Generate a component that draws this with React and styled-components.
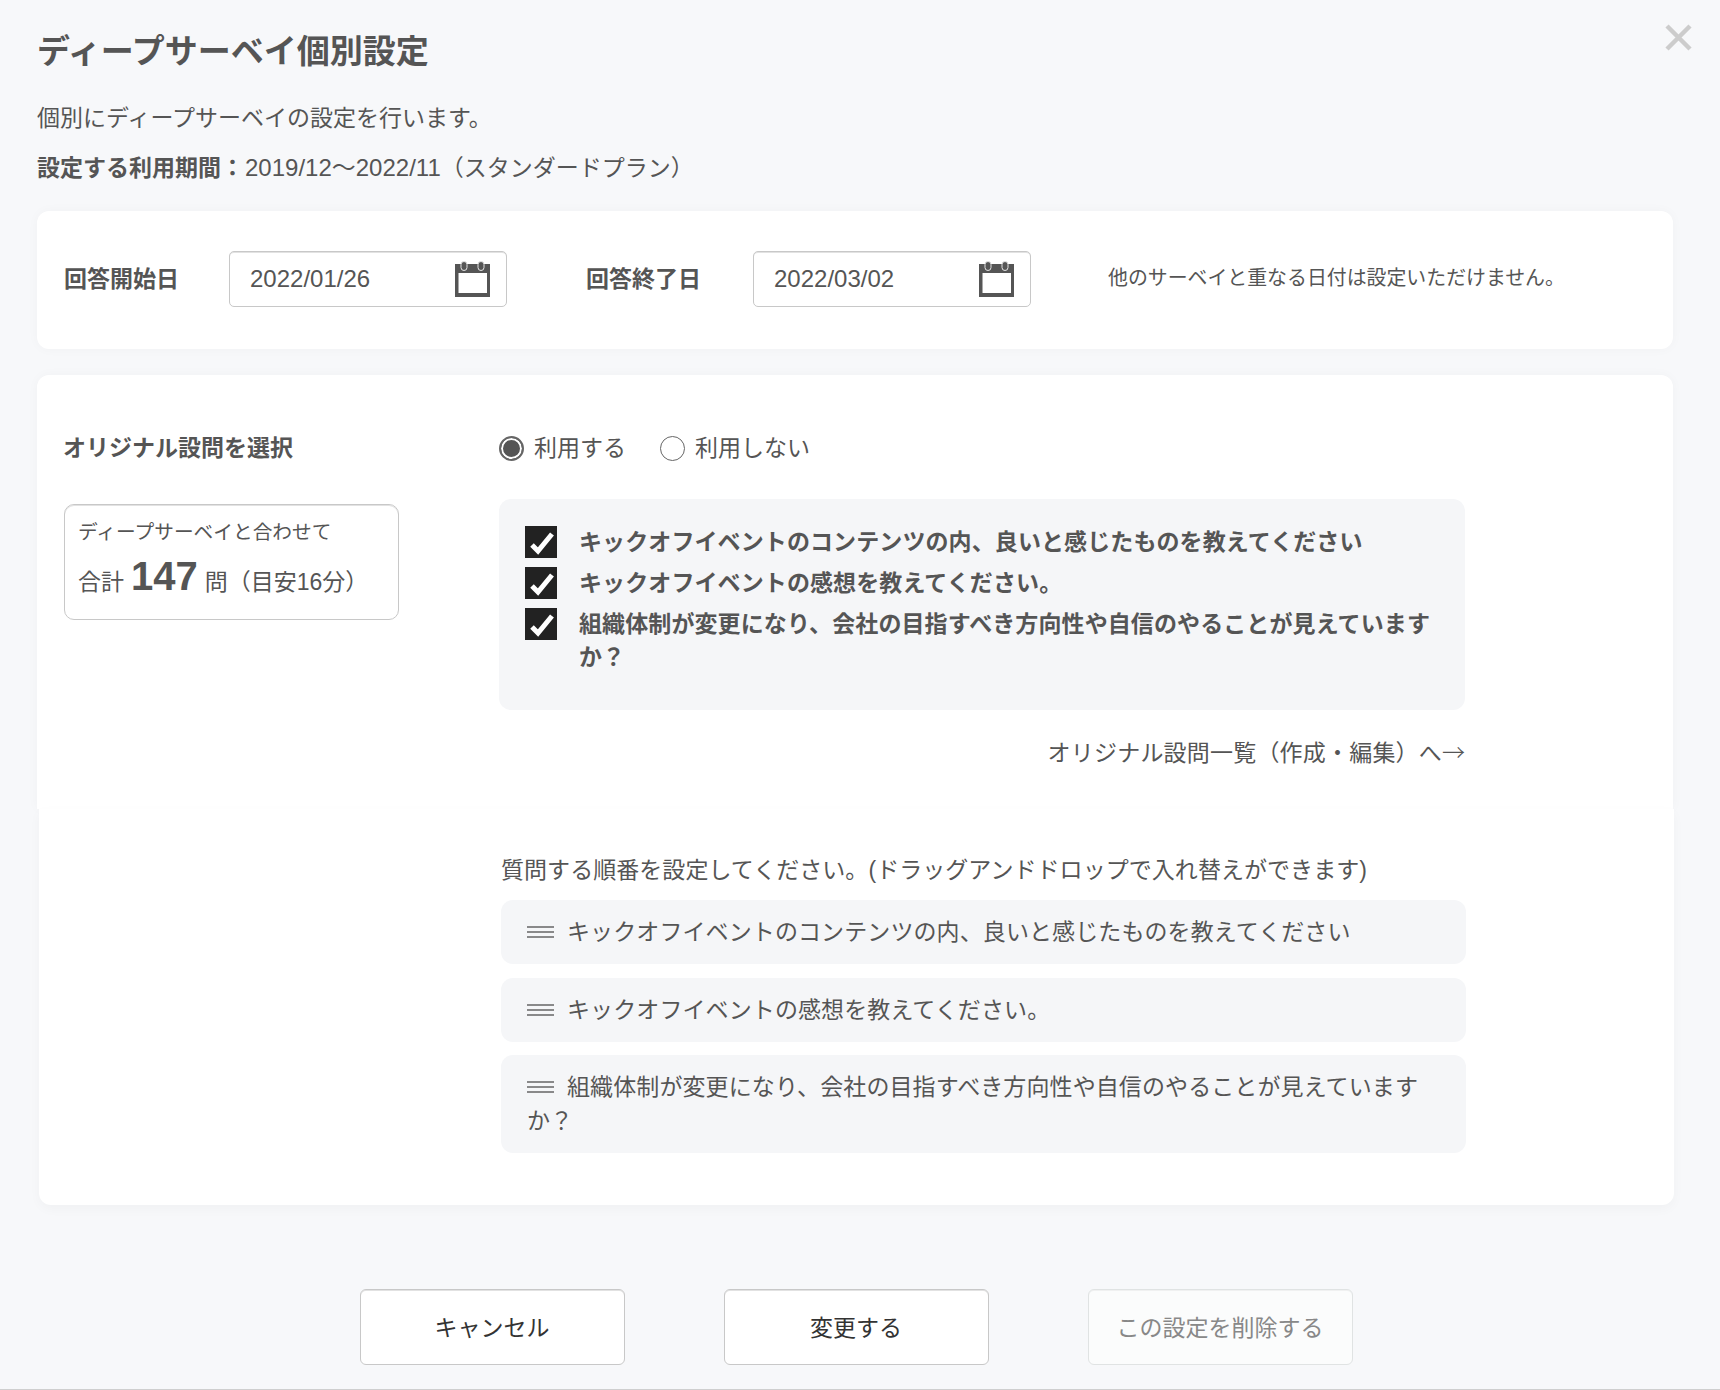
import React from "react";
import styled, { createGlobalStyle } from "styled-components";

const GlobalStyle = createGlobalStyle`
  html, body {
    margin: 0;
    padding: 0;
    background-color: #f7f8fa;
  }
  * {
    box-sizing: border-box;
  }
`;

const Page = styled.div`
  position: relative;
  height: 1390px;
  padding: 32px 47px 0px 37px;
  border-bottom: 1px solid #cfcfcf;
  color: #555;
  font-family: "Liberation Sans", "Noto Sans CJK JP", sans-serif;
  font-size: 23px;
  line-height: 34px;
`;

const CloseButton = styled.svg`
  position: absolute;
  top: 24px;
  left: 1665px;
  width: 27px;
  height: 27px;
`;

const Title = styled.h1`
  margin: 0;
  font-size: 33px;
  line-height: 40px;
  font-weight: 700;
`;

const Lead = styled.p`
  margin: 29px 0px 0px 0px;
`;

const Period = styled.p`
  margin: 16px 0px 0px 0px;
  strong {
    font-weight: 700;
    margin-right: 1px;
  }
`;

const PeriodDates = styled.span`
  font-size: 24px;
`;

const DateCard = styled.section`
  display: flex;
  align-items: center;
  height: 138px;
  margin-top: 26px;
  padding: 0px 27px 2px 27px;
  background-color: #fff;
  border-radius: 12px;
  box-shadow: 0px 0px 12px rgba(0, 0, 0, 0.03);
`;

const DateLabel = styled.span`
  width: ${(props) => props.width}px;
  font-weight: 700;
  flex-shrink: 0;
`;

const DateField = styled.div`
  display: flex;
  justify-content: space-between;
  align-items: center;
  width: 278px;
  height: 56px;
  margin-right: ${(props) => props.gap}px;
  padding: 0px 16px 0px 20px;
  border: 1px solid #c8c8c8;
  border-radius: 5px;
  box-shadow: inset 0px 1px 0px #e2e2e2;
  font-size: 24px;
  flex-shrink: 0;
`;

const DateNote = styled.span`
  position: relative;
  top: -1px;
  font-size: 19.9px;
`;

const OriginalCard = styled.section`
  display: grid;
  grid-template-columns: 336px 966px;
  column-gap: 100px;
  margin-top: 26px;
  padding: 56px 0px 39px 26px;
  background-color: #fff;
  border-radius: 12px 12px 0px 0px;
  box-shadow: 0px 0px 12px rgba(0, 0, 0, 0.03);
`;

const SectionLabel = styled.h2`
  margin: 0;
  font-size: 23px;
  line-height: 34px;
  font-weight: 700;
`;

const TotalBox = styled.div`
  height: 116px;
  margin-top: 39px;
  margin-left: 1px;
  padding: 12px 13px;
  border: 1px solid #c8c8c8;
  border-radius: 10px;
  box-shadow: inset 0px 1px 0px #e2e2e2;
`;

const TotalCaption = styled.div`
  font-size: 19.7px;
  line-height: 30px;
`;

const TotalLine = styled.div`
  margin-top: 5px;
  line-height: 48px;
  white-space: nowrap;
`;

const TotalNumber = styled.strong`
  margin: 0px 7px;
  font-size: 40px;
  font-weight: 700;
`;

const RadioRow = styled.div`
  display: flex;
  align-items: center;
`;

const RadioMark = styled.span`
  width: 25px;
  height: 25px;
  margin-right: 10px;
  border: ${(props) => (props.checked ? "2px solid #666" : "1.5px solid #666")};
  border-radius: 50%;
  background-color: ${(props) => (props.checked ? "#555" : "#fff")};
  box-shadow: ${(props) => (props.checked ? "inset 0px 0px 0px 2px #fff" : "none")};
  flex-shrink: 0;
`;

const RadioText = styled.span`
  margin-right: 34px;
`;

const CheckPanel = styled.div`
  margin-top: 34px;
  padding: 27px 24px 36px 26px;
  background-color: #f5f6f8;
  border-radius: 12px;
`;

const CheckRow = styled.div`
  display: flex;
  gap: 22px;
  margin-bottom: 8px;
  font-weight: 700;
  line-height: 33px;
  letter-spacing: 0.1px;
  &:last-child {
    margin-bottom: 0px;
  }
`;

const CheckBox = styled.span`
  display: flex;
  justify-content: center;
  align-items: center;
  width: 32px;
  height: 32px;
  background-color: #222;
  flex-shrink: 0;
`;

const ListLink = styled.a`
  display: block;
  margin-top: 24px;
  text-align: right;
  color: #555;
  letter-spacing: 0.2px;
  text-decoration: none;
`;

const LinkArrow = styled.span`
  font-family: "Noto Sans CJK JP", sans-serif;
  font-weight: 300;
  letter-spacing: 0px;
`;

const OrderCard = styled.section`
  margin-left: 2px;
  margin-right: -1px;
  padding: 44px 208px 52px 462px;
  background-color: #fff;
  border-radius: 0px 0px 12px 12px;
  box-shadow: 0px 4px 12px rgba(0, 0, 0, 0.03);
`;

const OrderHint = styled.div`
  margin-bottom: 13px;
  letter-spacing: 0.05px;
`;

const OrderRow = styled.div`
  margin-bottom: 13.5px;
  padding: 15px 26px;
  background-color: #f5f6f8;
  border-radius: 12px;
  letter-spacing: 0.1px;
  &:last-child {
    margin-bottom: 0px;
  }
`;

const Handle = styled.svg`
  width: 27px;
  height: 12px;
  margin-right: 13px;
  vertical-align: 2px;
`;

const Footer = styled.div`
  display: flex;
  justify-content: center;
  gap: 99px;
  margin-top: 84px;
  padding-left: 2px;
`;

const ActionButton = styled.button`
  width: 265px;
  height: 76px;
  padding: 0px 0px 3px 0px;
  border: 1px solid ${(props) => (props.disabled ? "#e0e3e3" : "#c8c8c8")};
  border-radius: 6px;
  box-shadow: inset 0px 1px 0px ${(props) => (props.disabled ? "#f0f1f1" : "#e2e2e2")};
  background-color: ${(props) => (props.disabled ? "#fbfcfc" : "#fff")};
  color: ${(props) => (props.disabled ? "#888" : "#333")};
  font-family: inherit;
  font-size: 23px;
`;

const questions = [
  "キックオフイベントのコンテンツの内、良いと感じたものを教えてください",
  "キックオフイベントの感想を教えてください。",
  "組織体制が変更になり、会社の目指すべき方向性や自信のやることが見えていますか？",
];

const CalendarIcon = () => (
  <svg width="35" height="36" viewBox="0 0 35 36">
    <path d="M0 3h35v33H0z" fill="#555" />
    <path d="M3.5 12h28.5v20H3.5z" fill="#fff" />
    <rect x="6" y="0.5" width="6" height="9" rx="3" fill="#555" stroke="#e4e4e4" />
    <rect x="23" y="0.5" width="6" height="9" rx="3" fill="#555" stroke="#e4e4e4" />
  </svg>
);

const CheckIcon = () => (
  <svg width="32" height="32" viewBox="0 0 32 32">
    <path d="M7 19l6 6L27 8" fill="none" stroke="#fff" strokeWidth="5" />
  </svg>
);

const HandleIcon = () => (
  <Handle viewBox="0 0 27 12">
    <path d="M0 1h27M0 6h27M0 11h27" stroke="#666" strokeWidth="1.5" />
  </Handle>
);

export default function App() {
  return (
    <>
      <GlobalStyle />
      <Page>
        <CloseButton viewBox="0 0 27 27">
          <path d="M2 2l23 23M25 2L2 25" stroke="#ccc" strokeWidth="4.5" />
        </CloseButton>
        <Title>ディープサーベイ個別設定</Title>
        <Lead>個別にディープサーベイの設定を行います。</Lead>
        <Period>
          <strong>設定する利用期間：</strong>
          <PeriodDates>2019/12〜2022/11</PeriodDates>（スタンダードプラン）
        </Period>

        <DateCard>
          <DateLabel width={165}>回答開始日</DateLabel>
          <DateField gap={79}>
            2022/01/26
            <CalendarIcon />
          </DateField>
          <DateLabel width={167}>回答終了日</DateLabel>
          <DateField gap={77}>
            2022/03/02
            <CalendarIcon />
          </DateField>
          <DateNote>他のサーベイと重なる日付は設定いただけません。</DateNote>
        </DateCard>

        <OriginalCard>
          <div>
            <SectionLabel>オリジナル設問を選択</SectionLabel>
            <TotalBox>
              <TotalCaption>ディープサーベイと合わせて</TotalCaption>
              <TotalLine>
                合計<TotalNumber>147</TotalNumber>問（目安16分）
              </TotalLine>
            </TotalBox>
          </div>
          <div>
            <RadioRow>
              <RadioMark checked />
              <RadioText>利用する</RadioText>
              <RadioMark />
              <RadioText>利用しない</RadioText>
            </RadioRow>
            <CheckPanel>
              {questions.map((question) => (
                <CheckRow key={question}>
                  <CheckBox>
                    <CheckIcon />
                  </CheckBox>
                  <span>{question}</span>
                </CheckRow>
              ))}
            </CheckPanel>
            <ListLink>
              オリジナル設問一覧（作成・編集）へ<LinkArrow>→</LinkArrow>
            </ListLink>
          </div>
        </OriginalCard>

        <OrderCard>
          <OrderHint>質問する順番を設定してください。(ドラッグアンドドロップで入れ替えができます)</OrderHint>
          {questions.map((question) => (
            <OrderRow key={question}>
              <HandleIcon />
              {question}
            </OrderRow>
          ))}
        </OrderCard>

        <Footer>
          <ActionButton>キャンセル</ActionButton>
          <ActionButton>変更する</ActionButton>
          <ActionButton disabled>この設定を削除する</ActionButton>
        </Footer>
      </Page>
    </>
  );
}
